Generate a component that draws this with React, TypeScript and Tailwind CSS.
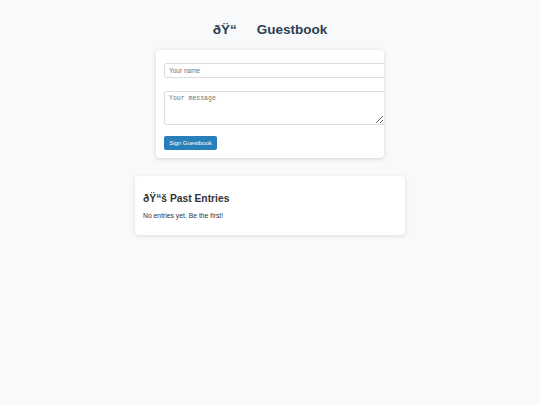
export default function App() {
  return (
    <div className="min-h-[405px] w-full bg-[#f8f9fb] font-['Liberation_Sans',Arial,sans-serif] text-[#333]">
      <div className="flex flex-col items-center pt-[20px]">
        <h1 className="text-[13.5px] font-bold leading-[20px] text-[#2c3e50]">
          ðŸ“<span className="ml-[20px]">Guestbook</span>
        </h1>

        <div className="mt-[10px] w-[228px] overflow-hidden rounded-[4px] bg-white px-[8px] pb-[8px] pt-[13px] shadow-[0_1px_4px_rgba(0,0,0,0.15)]">
          <input
            placeholder="Your name"
            className="block h-[15px] w-[calc(100%+10px)] rounded-[2px] border border-[#ddd] px-[4px] text-[6.5px] placeholder:text-[#757575] outline-none"
          />
          <textarea
            placeholder="Your message"
            className="mt-[13px] block h-[34px] w-[calc(100%+9px)] resize-y rounded-[2px] border border-[#ddd] px-[4px] py-[2px] font-['Liberation_Mono',monospace] text-[6.5px] placeholder:text-[#757575] outline-none"
          />
          <button className="mt-[11px] block h-[14px] w-[53px] rounded-[2px] bg-[#2980b9] text-[6px] text-white">
            Sign Guestbook
          </button>
        </div>

        <div className="mt-[18px] w-[270px] rounded-[4px] bg-white px-[8px] pb-[14px] pt-[16px] shadow-[0_1px_4px_rgba(0,0,0,0.12)]">
          <h2 className="text-[10.3px] font-bold leading-[14px] text-[#333]">ðŸ“š Past Entries</h2>
          <p className="mt-[5px] text-[6.8px] leading-[10px] text-[#333]">No entries yet. Be the first!</p>
        </div>
      </div>
    </div>
  );
}
